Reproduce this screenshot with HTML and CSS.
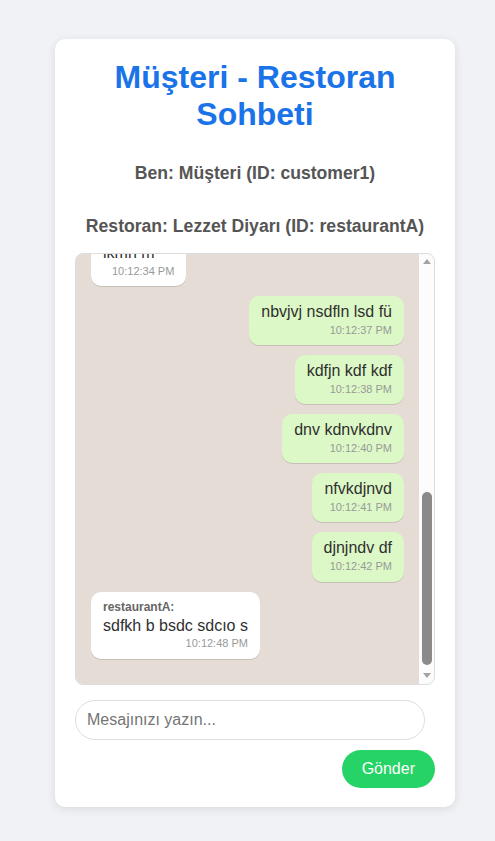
FILE: index.html
```html
<!DOCTYPE html>
<html lang="tr">
<head>
<meta charset="utf-8">
<title>Müşteri - Restoran Sohbeti</title>
<link rel="stylesheet" href="styles.css">
</head>
<body>
<div class="card">
  <h1 class="title">Müşteri - Restoran Sohbeti</h1>
  <p class="info info-me">Ben: Müşteri (ID: customer1)</p>
  <p class="info info-other">Restoran: Lezzet Diyarı (ID: restaurantA)</p>
  <div class="chat-wrap">
    <div class="chat-box">
      <div class="messages">
        <div class="msg sent"><div class="text">merhaba</div><div class="time">10:11:52 PM</div></div>
        <div class="msg received"><div class="sender">restaurantA:</div><div class="text">merhaba, hoş geldiniz</div><div class="time">10:11:58 PM</div></div>
        <div class="msg sent"><div class="text">sipariş vermek istiyorum</div><div class="time">10:12:05 PM</div></div>
        <div class="msg sent"><div class="text">sdfsdf sdf</div><div class="time">10:12:10 PM</div></div>
        <div class="msg received"><div class="sender">restaurantA:</div><div class="text">tabii, buyurun</div><div class="time">10:12:16 PM</div></div>
        <div class="msg sent"><div class="text">jksdf kjsdf</div><div class="time">10:12:21 PM</div></div>
        <div class="msg sent"><div class="text">asdjk lsd</div><div class="time">10:12:25 PM</div></div>
        <div class="msg received"><div class="sender">restaurantA:</div><div class="text">sdkfj ksd</div><div class="time">10:12:30 PM</div></div>
        <div class="msg received"><div class="sender">restaurantA:</div><div class="text">lkmn m</div><div class="time">10:12:34 PM</div></div>
        <div class="msg sent"><div class="text">nbvjvj nsdfln lsd fü</div><div class="time">10:12:37 PM</div></div>
        <div class="msg sent"><div class="text">kdfjn kdf kdf</div><div class="time">10:12:38 PM</div></div>
        <div class="msg sent"><div class="text">dnv kdnvkdnv</div><div class="time">10:12:40 PM</div></div>
        <div class="msg sent"><div class="text">nfvkdjnvd</div><div class="time">10:12:41 PM</div></div>
        <div class="msg sent"><div class="text">djnjndv df</div><div class="time">10:12:42 PM</div></div>
        <div class="msg received"><div class="sender">restaurantA:</div><div class="text">sdfkh b bsdc sdcıo s</div><div class="time">10:12:48 PM</div></div>
      </div>
    </div>
    <div class="scrollbar" aria-hidden="true">
      <div class="sb-btn"><span class="arrow-up"></span></div>
      <div class="sb-track"><div class="sb-thumb"></div></div>
      <div class="sb-btn"><span class="arrow-down"></span></div>
    </div>
  </div>
  <input class="msg-input" type="text" placeholder="Mesajınızı yazın...">
  <div class="actions">
    <button class="send-btn" type="button">Gönder</button>
  </div>
</div>
</body>
</html>
```

FILE: styles.css
```css
html, body {
  margin: 0;
  padding: 0;
}
body {
  background: #f0f2f5;
  font-family: "Liberation Sans", Arial, sans-serif;
  padding: 39px 0 34px 55px;
}
.card {
  width: 400px;
  box-sizing: border-box;
  background: #fff;
  border-radius: 10px;
  box-shadow: 0 2px 10px rgba(0, 0, 0, 0.1);
  padding: 20px 20px 19px;
}
.title {
  margin: 0;
  font-size: 32px;
  line-height: 36.8px;
  font-weight: bold;
  color: #1a73e8;
  text-align: center;
}
.info {
  margin: 0;
  font-size: 17.6px;
  line-height: 21px;
  font-weight: bold;
  color: #555;
  text-align: center;
}
.info-me {
  margin-top: 30px;
}
.info-other {
  margin-top: 32px;
}
.chat-wrap {
  margin-top: 16px;
  height: 430px;
  border: 1px solid #ddd;
  border-radius: 8px;
  background: #e5ddd5;
  overflow: hidden;
  display: flex;
}
.chat-box {
  flex: 1;
  min-width: 0;
  overflow-y: auto;
  scrollbar-width: none;
  display: flex;
  flex-direction: column-reverse;
}
.chat-box::-webkit-scrollbar {
  display: none;
}
.scrollbar {
  width: 15px;
  flex: none;
  background: #fcfcfc;
  display: flex;
  flex-direction: column;
}
.sb-btn {
  height: 15px;
  flex: none;
  display: flex;
  align-items: center;
  justify-content: center;
}
.arrow-up {
  width: 0;
  height: 0;
  border-left: 4.5px solid transparent;
  border-right: 4.5px solid transparent;
  border-bottom: 5px solid #a3a3a3;
  margin-top: 1px;
}
.arrow-down {
  width: 0;
  height: 0;
  border-left: 4.5px solid transparent;
  border-right: 4.5px solid transparent;
  border-top: 5px solid #a3a3a3;
  margin-top: -1px;
}
.sb-track {
  flex: 1;
  display: flex;
  flex-direction: column;
  justify-content: flex-end;
}
.sb-thumb {
  height: 173px;
  margin: 0 2px 4px 3px;
  border-radius: 5px;
  background: #8a8a8a;
}
.messages {
  display: flex;
  flex-direction: column;
  padding: 4px 15px 15px;
}
.msg {
  max-width: 70%;
  border-radius: 10px;
  padding: 7px 12px 9px;
  margin-bottom: 10px;
  box-shadow: 0 1px 0.5px rgba(0, 0, 0, 0.13);
  color: #303030;
}
.msg.sent {
  align-self: flex-end;
  background: #dcf8c6;
}
.msg.received {
  align-self: flex-start;
  background: #fff;
  padding-top: 8px;
}
.sender {
  font-size: 12px;
  line-height: 14px;
  font-weight: bold;
  color: #666;
  margin-bottom: 3px;
}
.text {
  font-size: 16px;
  line-height: 18.4px;
}
.time {
  font-size: 11px;
  line-height: 12.65px;
  color: #999;
  text-align: right;
  margin-top: 2px;
}
.msg-input {
  display: block;
  margin-top: 15px;
  width: 350px;
  height: 40px;
  box-sizing: border-box;
  padding: 10px 11px;
  border: 1px solid #ddd;
  border-radius: 20px;
  font-family: "Liberation Sans", Arial, sans-serif;
  font-size: 16px;
  outline: none;
}
.msg-input::placeholder {
  color: #757575;
}
.actions {
  display: flex;
  justify-content: flex-end;
  margin-top: 10px;
}
.send-btn {
  border: none;
  border-radius: 20px;
  background: #25d366;
  color: #fff;
  font-family: "Liberation Sans", Arial, sans-serif;
  font-size: 16px;
  line-height: 18px;
  padding: 10px 20px;
  cursor: pointer;
}
```
